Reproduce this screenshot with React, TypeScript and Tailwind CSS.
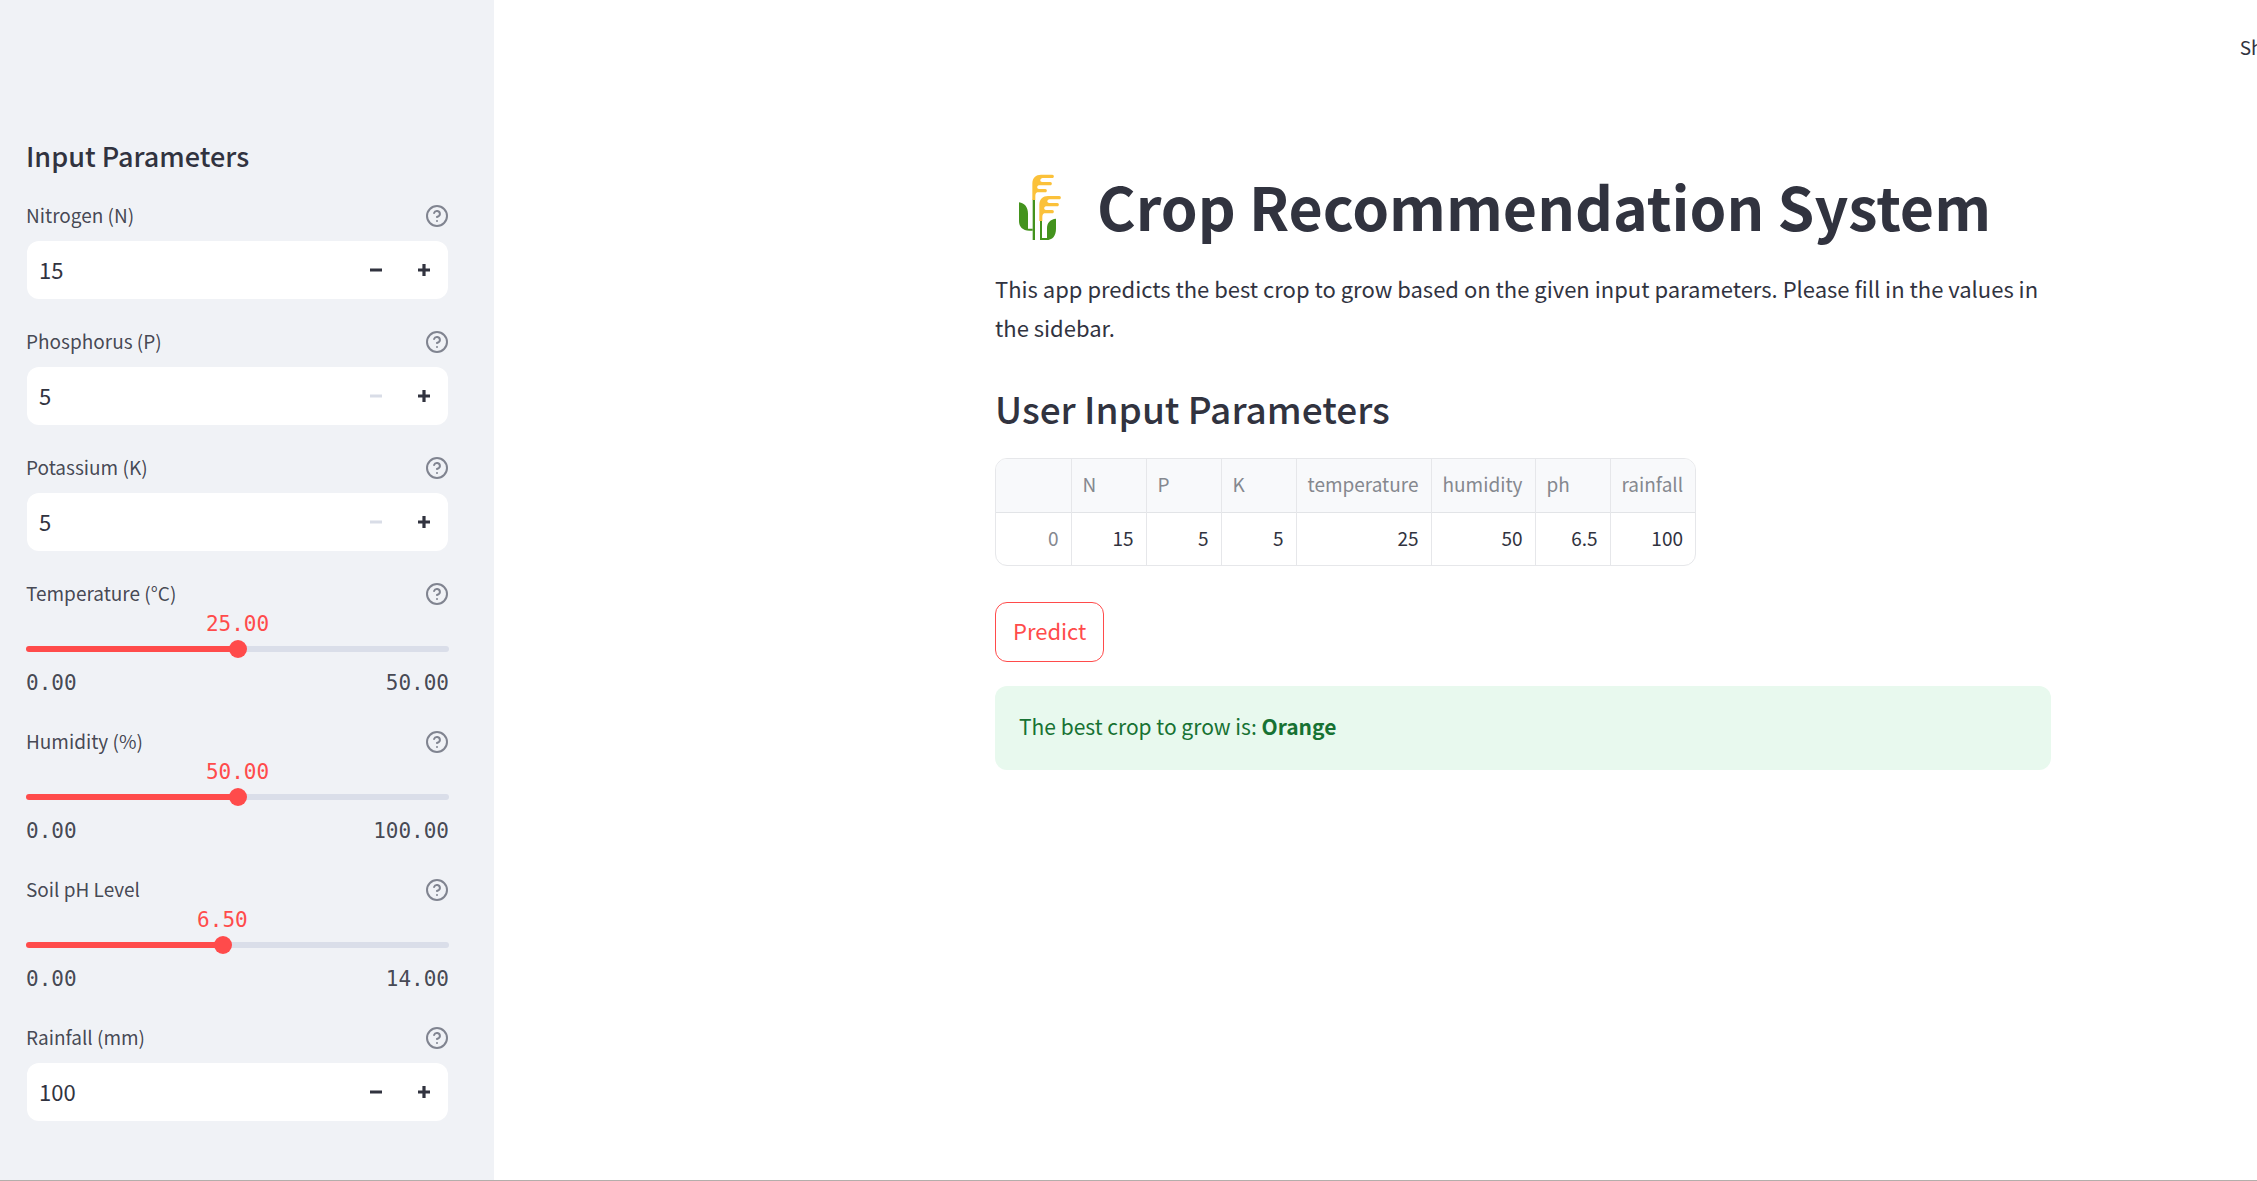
import { useId, useState } from "react";

function HelpIcon() {
  return (
    <svg viewBox="0 0 24 24" className="size-6" fill="none" stroke="#808490" strokeWidth="2" strokeLinecap="round" strokeLinejoin="round" aria-hidden="true">
      <circle cx="12" cy="12" r="10" />
      <path d="M9.09 9a3 3 0 0 1 5.83 1c0 2-3 3-3 3" />
      <path d="M12 17h.01" />
    </svg>
  );
}

function WheatIcon() {
  return (
    <svg viewBox="0 0 246 201" className="h-[67px] w-[82px] shrink-0" aria-hidden="true">
      <g transform="translate(15 -40)">
        <g fill="#43931d">
          <path d="M98 119H105V241H98Z" />
          <path d="M57 128C74 130 84 143 84 162V207H98V213H88C68 213 57 201 57 184Z" />
          <path d="M120 182H126V235H141V206C141 189 151 179 168 177V207C168 229 157 241 139 241H120Z" />
        </g>
        <g fill="#fbc13a">
          <path d="M97 121V72C97 54 108 45 123 45H157C163 45 163 55 157 55H128C120 55 118 67 127 67H151C157 67 157 77 151 77H117C110 78 110 88 117 88H136C142 88 142 98 136 98H112C108 99 106 104 106 109V121Z" />
          <path d="M118 184V136C118 118 129 109 144 109H178C184 109 184 119 178 119H149C141 119 139 130 148 130H172C178 130 178 140 172 140H138C131 141 131 151 138 151H157C163 151 163 161 157 161H133C129 162 127 167 127 172V184Z" />
        </g>
      </g>
    </svg>
  );
}

function FieldLabel({ id, text }: { id: string; text: string }) {
  return (
    <div className="flex h-[34px] items-center justify-between">
      <label htmlFor={id} className="pb-0.5 text-[19px] text-[#31333f]/90">{text}</label>
      <button type="button" aria-label={`Help: ${text}`} className="cursor-pointer">
        <HelpIcon />
      </button>
    </div>
  );
}

function NumberField({ label, initial, min }: { label: string; initial: number; min: number }) {
  const id = useId();
  const [value, setValue] = useState(initial);
  const atMin = value <= min;
  return (
    <div>
      <FieldLabel id={id} text={label} />
      <div className="mx-px mt-2 flex h-[58px] items-center overflow-hidden rounded-xl bg-white">
        <input
          id={id}
          inputMode="numeric"
          value={value}
          onChange={(e) => setValue(Number(e.target.value) || min)}
          className="h-full min-w-0 flex-1 bg-transparent pb-0.5 pl-3 text-[22px] text-[#31333f] outline-none"
        />
        <button
          type="button"
          aria-label={`Decrease ${label}`}
          disabled={atMin}
          onClick={() => setValue(value - 1)}
          className="flex h-full w-12 items-center justify-center text-[#31333f] disabled:text-[#d9dde7]"
        >
          <svg viewBox="0 0 12 12" className="size-3" fill="currentColor" aria-hidden="true">
            <path d="M0 4.4H12V7.6H0Z" />
          </svg>
        </button>
        <button
          type="button"
          aria-label={`Increase ${label}`}
          onClick={() => setValue(value + 1)}
          className="flex h-full w-12 items-center justify-center text-[#31333f]"
        >
          <svg viewBox="0 0 12 12" className="size-3" fill="currentColor" aria-hidden="true">
            <path d="M4.4 0H7.6V4.4H12V7.6H7.6V12H4.4V7.6H0V4.4H4.4Z" />
          </svg>
        </button>
      </div>
    </div>
  );
}

function SliderField({ label, initial, max }: { label: string; initial: number; max: number }) {
  const id = useId();
  const [value, setValue] = useState(initial);
  const percent = (value / max) * 100;
  return (
    <div className="text-[#31333f]">
      <FieldLabel id={id} text={label} />
      <div className="relative h-6 font-['DejaVu_Sans_Mono',monospace] text-[21px] leading-[26px] text-[#ff4b4b]">
        <output htmlFor={id} className="absolute -translate-x-1/2" style={{ left: `${percent}%` }}>
          {value.toFixed(2)}
        </output>
      </div>
      <div className="flex h-7 items-center">
        <input
          id={id}
          type="range"
          min={0}
          max={max}
          step={0.01}
          value={value}
          onChange={(e) => setValue(Number(e.target.value))}
          style={{ backgroundImage: `linear-gradient(to right, #ff4b4b ${percent}%, #dadee9 ${percent}%)` }}
          className="h-1.5 w-full cursor-pointer appearance-none rounded-full [&::-webkit-slider-thumb]:size-[18px] [&::-webkit-slider-thumb]:appearance-none [&::-webkit-slider-thumb]:rounded-full [&::-webkit-slider-thumb]:bg-[#ff4b4b]"
        />
      </div>
      <div className="flex justify-between pt-1 font-['DejaVu_Sans_Mono',monospace] text-[21px] leading-8 text-[#31333f]/90">
        <span>0.00</span>
        <span>{max.toFixed(2)}</span>
      </div>
    </div>
  );
}

const columns = [
  { name: "N", value: "15", width: "w-[75px]" },
  { name: "P", value: "5", width: "w-[75px]" },
  { name: "K", value: "5", width: "w-[75px]" },
  { name: "temperature", value: "25", width: "w-[135px]" },
  { name: "humidity", value: "50", width: "w-[104px]" },
  { name: "ph", value: "6.5", width: "w-[75px]" },
  { name: "rainfall", value: "100", width: "w-[85px]" },
];

function ParameterTable() {
  return (
    <div className="w-fit overflow-hidden rounded-xl border border-[#e6e7ea]">
      <table className="table-fixed border-collapse text-[19px] leading-6">
        <thead>
          <tr className="h-[53px] border-b border-[#e2e4e7] bg-[#f8f9fb] text-left text-[#85888f]">
            <th className="w-[75px]" aria-label="Row" />
            {columns.map((c) => (
              <th key={c.name} scope="col" className={`${c.width} border-l border-[#e6e7ea] px-[11px] pb-0.5 font-normal`}>
                {c.name}
              </th>
            ))}
          </tr>
        </thead>
        <tbody>
          <tr className="h-[53px] text-right text-[#31333f]">
            <th scope="row" className="px-3 pb-0.5 text-right font-normal text-[#85888f]">0</th>
            {columns.map((c) => (
              <td key={c.name} className="border-l border-[#e6e7ea] px-3 pb-0.5">{c.value}</td>
            ))}
          </tr>
        </tbody>
      </table>
    </div>
  );
}

export default function App() {
  return (
    <div className="flex min-h-screen overflow-hidden border-b border-[#b3aeab] bg-white font-['Noto_Sans_CJK_SC',sans-serif] text-[#31333f]">
      <aside className="w-[494px] shrink-0 bg-[#f0f2f6] pr-[45px] pl-[26px] pt-[138px]">
        <h2 className="mb-[25px] text-[27px] leading-9 font-medium">Input Parameters</h2>
        <div className="flex flex-col gap-[26px]">
          <NumberField label="Nitrogen (N)" initial={15} min={5} />
          <NumberField label="Phosphorus (P)" initial={5} min={5} />
          <NumberField label="Potassium (K)" initial={5} min={5} />
          <SliderField label="Temperature (°C)" initial={25} max={50} />
          <SliderField label="Humidity (%)" initial={50} max={100} />
          <SliderField label="Soil pH Level" initial={6.5} max={14} />
          <NumberField label="Rainfall (mm)" initial={100} min={5} />
        </div>
      </aside>
      <div className="min-w-0 flex-1">
        <header className="flex h-24 items-center justify-end">
          <button type="button" className="-mr-[34px] pb-0.5 text-[19px]">Share</button>
        </header>
        <main className="grid grid-cols-[501fr_minmax(0,1056px)_206fr]">
          <div className="col-start-2 pt-[70px]">
            <h1 className="flex items-center gap-5 text-[59px] leading-[80px] font-bold">
              <WheatIcon />
              Crop Recommendation System
            </h1>
            <p className="mt-[23px] text-[22px] leading-[39px]">
              This app predicts the best crop to grow based on the given input parameters. Please fill in the values in
              the sidebar.
            </p>
            <h2 className="mt-9 mb-[25px] text-[37px] leading-[50px] font-medium">User Input Parameters</h2>
            <ParameterTable />
            <button type="button" className="mt-9 h-[60px] rounded-xl border border-[#ff4b4b] px-[17px] pb-1 text-[22px] text-[#ff4b4b]">
              Predict
            </button>
            <div role="status" className="mt-6 flex h-[84px] items-center rounded-xl bg-[#e8f9ee] px-6 pb-0.5 text-[21px] text-[#177233]">
              <p>
                The best crop to grow is: <strong className="font-bold">Orange</strong>
              </p>
            </div>
          </div>
        </main>
      </div>
    </div>
  );
}
